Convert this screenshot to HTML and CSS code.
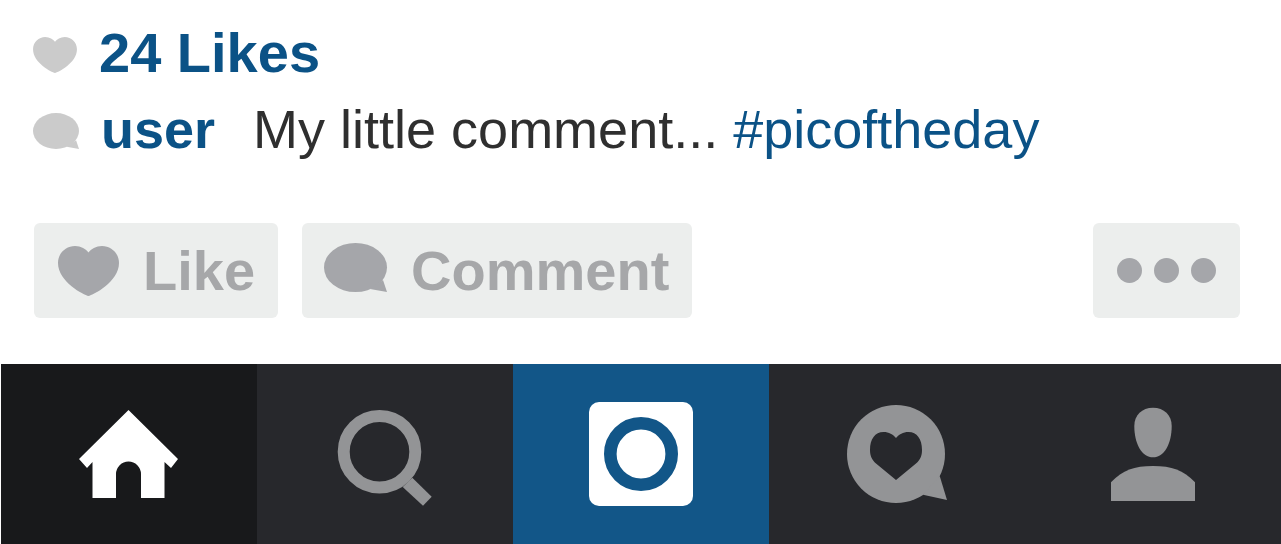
FILE: index.html
```html
<!DOCTYPE html>
<html lang="en">
<head>
<meta charset="UTF-8">
<meta name="viewport" content="width=device-width, initial-scale=1.0">
<title>Post</title>
<link rel="stylesheet" href="styles.css">
</head>
<body>

<main class="post">
    <div class="row likes">
        <svg class="icon" width="44" height="36" viewBox="0 0 61 50" aria-hidden="true">
            <path d="M30.5 50C26 49 0 36 0 17C0 7 8 0 17 0C23 0 28 3 30.5 6.5C33 3 38 0 44 0C53 0 61 7 61 17C61 36 35 49 30.5 50Z"/>
        </svg>
        <a href="#">24 Likes</a>
    </div>
    <div class="row comment">
        <svg class="icon" width="46" height="36" viewBox="0 0 63 49" aria-hidden="true">
            <ellipse cx="31.5" cy="24.5" rx="31.5" ry="24.5"/>
            <path d="M59 37L63 49L46 46Z"/>
        </svg>
        <a class="user" href="#">user</a>
        <p>My little comment... <a href="#">#picoftheday</a></p>
    </div>
    <div class="actions">
        <button class="btn" type="button">
            <svg width="65" height="50" viewBox="-2 0 65 50" aria-hidden="true">
                <path d="M30.5 50C26 49 0 36 0 17C0 7 8 0 17 0C23 0 28 3 30.5 6.5C33 3 38 0 44 0C53 0 61 7 61 17C61 36 35 49 30.5 50Z"/>
            </svg>
            Like
        </button>
        <button class="btn" type="button">
            <svg width="65" height="56" viewBox="0 0 65 56" aria-hidden="true">
                <ellipse cx="31.5" cy="24.5" rx="31.5" ry="24.5"/>
                <path d="M59 37L63 49L46 46Z"/>
            </svg>
            Comment
        </button>
        <button class="btn more" type="button" aria-label="More">
            <svg width="102" height="26" viewBox="0 0 102 26" aria-hidden="true">
                <circle cx="14.5" cy="12.5" r="12.5"/>
                <circle cx="51.5" cy="12.5" r="12.5"/>
                <circle cx="88.5" cy="12.5" r="12.5"/>
            </svg>
        </button>
    </div>
</main>

<nav class="tabs">
    <a class="tab active" href="#" aria-label="Home">
        <svg viewBox="0 0 104 104">
            <path d="M51.5 8L101 57L94 66L87.5 60V96H64V72A12.5 12.5 0 0 0 39 72V96H15.5V60L10 66L2 57Z"/>
        </svg>
    </a>
    <a class="tab" href="#" aria-label="Search">
        <svg viewBox="0 0 104 104">
            <circle cx="46.5" cy="49.7" r="35.8" fill="none" stroke="currentColor" stroke-width="12"/>
            <path d="M69.7 85L90 103.7L98.7 94.7L79.3 75.7Z"/>
        </svg>
    </a>
    <a class="tab camera" href="#" aria-label="Camera">
        <svg viewBox="0 0 104 104">
            <rect width="104" height="104" rx="10"/>
            <circle class="lens" cx="52" cy="52" r="30.7" stroke-width="12.6"/>
        </svg>
    </a>
    <a class="tab" href="#" aria-label="Activity">
        <svg viewBox="0 0 104 104">
            <circle cx="51" cy="52" r="49"/>
            <path d="M94.7 74L102 98L78 92.7Z"/>
            <path class="cutout" d="M51 78L31 61.5C27 58 25 54 25 48C25 37 30 30 38.5 30C44 30 48 32.5 51 36C54 32.5 58 30 63.5 30C72 30 77 37 77 48C77 54 75 58 71 61.5Z"/>
        </svg>
    </a>
    <a class="tab" href="#" aria-label="Profile">
        <svg viewBox="0 0 104 104">
            <path d="M52 5.7C63 5.7 70.7 13 70.7 24C70.7 42 63 55.3 52 55.3C41 55.3 33.3 42 33.3 24C33.3 13 41 5.7 52 5.7Z"/>
            <path d="M10 99V80.3C22 68 33 64 52 64C71 64 82 68 94 80.3V99Z"/>
        </svg>
    </a>
</nav>

</body>
</html>
```

FILE: styles.css
```css
body {
    margin: 0;
    font-family: "Liberation Sans", Arial, sans-serif;
    background-color: #fff;
    color: #2f2f2f;
}
a {
    color: #0b5286;
    text-decoration: none;
}
svg {
    display: block;
    flex-shrink: 0;
    fill: currentColor;
}
.post {
    padding: 15px 41px 46px 33px;
}
.row {
    display: flex;
    align-items: center;
    gap: 22px;
    line-height: 76px;
}
.icon {
    margin-top: 3px;
    color: #cbcbcb;
}
.likes {
    font-size: 56px;
    font-weight: bold;
}
.comment {
    font-size: 54px;
}
.comment p {
    margin: 0 0 0 16px;
}
.user {
    font-weight: bold;
}
.actions {
    display: flex;
    gap: 24px;
    margin: 56px 0 0 1px;
}
.btn {
    display: flex;
    align-items: center;
    gap: 22px;
    padding: 16px 23px 15px 22px;
    border: none;
    border-radius: 6px;
    background-color: #eceeed;
    color: #a6a7a9;
    font-family: inherit;
    font-size: 56px;
    font-weight: bold;
    line-height: 64px;
    cursor: pointer;
}
.btn svg {
    color: #a5a6aa;
}
.more {
    margin-left: auto;
}
.tabs {
    display: grid;
    grid-template-columns: repeat(5, 1fr);
    margin-left: 1px;
    background-color: #27282c;
}
.tab {
    display: flex;
    justify-content: center;
    padding: 38px 0;
    color: #939496;
}
.tab svg {
    width: 104px;
    height: 104px;
}
.active {
    background-color: #18191b;
    color: #fff;
}
.camera {
    background-color: #125688;
    color: #fff;
}
.lens {
    fill: none;
    stroke: #125688;
}
.cutout {
    fill: #27282c;
}
```
